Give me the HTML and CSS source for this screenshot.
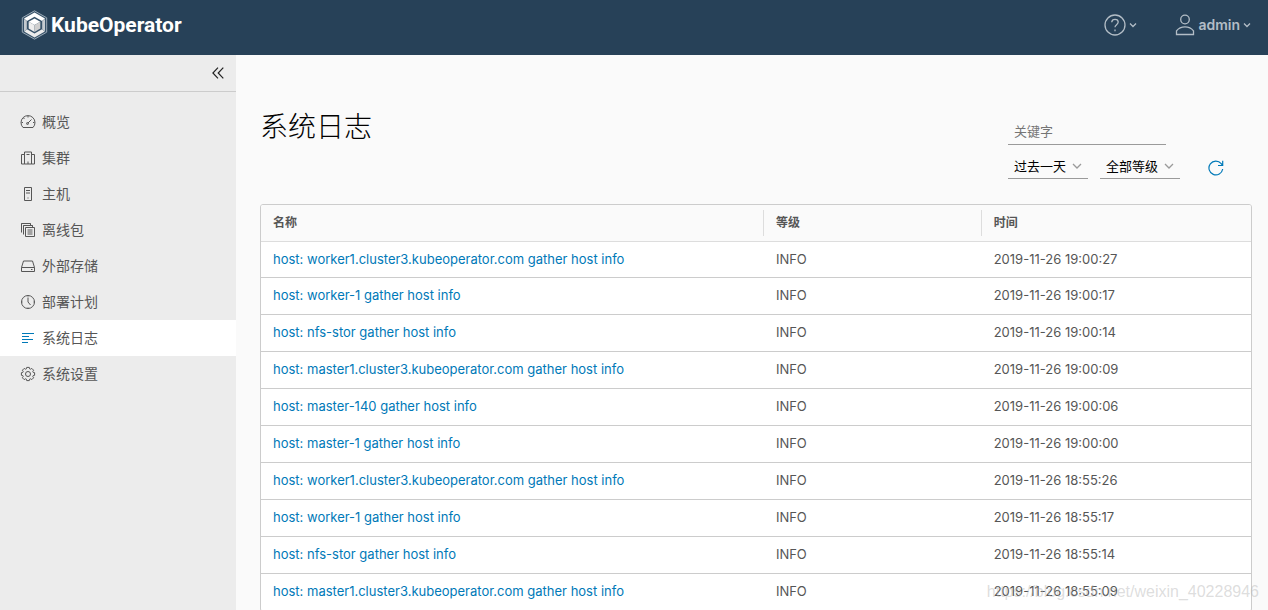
FILE: index.html
```html
<!DOCTYPE html>
<html lang="zh-CN">
<head>
<meta charset="utf-8">
<title>KubeOperator</title>
<link rel="stylesheet" href="styles.css">
</head>
<body>
<header class="header">
  <a class="brand" href="#">
    <svg class="brand-mark" viewBox="0 0 26 30" aria-hidden="true">
      <path d="M13 .8 25.2 7.8v14.4L13 29.2.8 22.2V7.8z" fill="#38536a" stroke="#9aa9b6" stroke-width="1"/>
      <path d="M13 2.500 23.500 8.500 20.500 11 13 6.800 5.500 11 2.500 8.500z" fill="#fff"/>
      <path d="M2.500 9 5.300 11v8.300l-2.800 2zM23.500 9 20.700 11v8.300l2.800 2z" fill="#c5cbd0"/>
      <path d="M2.700 21.500 5.500 19.300 13 23.600l7.500-4.300 2.800 2.200L13 27.500z" fill="#ececec"/>
      <path d="M13 8.600 18.800 11.800 13 15 7.200 11.800z" fill="#fff"/>
      <path d="M7.200 11.800 13 15v6.900l-5.800-3.400z" fill="#eee"/>
      <path d="M18.800 11.800 13 15v6.900l5.800-3.400z" fill="#cfcfcf"/>
    </svg>
    <span class="brand-name">KubeOperator</span>
  </a>
  <div class="header-actions">
    <button class="header-button" type="button" aria-label="帮助">
      <svg class="icon-help" viewBox="0 0 22 22" aria-hidden="true"><circle cx="11" cy="11" r="10"/><path d="M7.700 8.300c.2-1.900 1.500-2.900 3.300-2.900 1.900 0 3.200 1 3.200 2.700 0 2.600-3.200 2.500-3.200 5.200"/><path d="M11 15.500v1.700"/></svg>
      <svg class="icon-caret" viewBox="0 0 8 6" aria-hidden="true"><path d="M1 1.500 4 4.500 7 1.500"/></svg>
    </button>
    <button class="header-button" type="button">
      <svg class="icon-user" viewBox="0 0 20 22" aria-hidden="true"><circle cx="10" cy="5.500" r="4.300"/><path d="M1.500 20.500v-3.700c2-2.600 5-4 8.500-4s6.500 1.400 8.500 4v3.700z"/></svg>
      <span>admin</span>
      <svg class="icon-caret" viewBox="0 0 8 6" aria-hidden="true"><path d="M1 1.500 4 4.500 7 1.500"/></svg>
    </button>
  </div>
</header>
<div class="body">
  <nav class="sidebar">
    <div class="collapse-row">
      <button class="collapse" type="button" aria-label="收起"><svg viewBox="0 0 12 12" aria-hidden="true"><path d="M6 .7.9 6 6 11.300M11.300.7 6.200 6l5.100 5.300"/></svg></button>
    </div>
    <ul class="menu">
      <li><a class="menu-item" href="#"><svg viewBox="0 0 16 16" aria-hidden="true"><path d="M3 13.500a7 7 0 1 1 10 0z"/><path d="M8 2v1.500M1.500 8.500H3M13 8.500h1.500M3.500 4l1 1M7.500 9.500l4-4"/><circle cx="7.500" cy="9.500" r="1"/></svg>概览</a></li>
      <li><a class="menu-item" href="#"><svg viewBox="0 0 16 16" aria-hidden="true"><path d="M4.500 14V2h7v12zM4.500 4.500h-3V14h3M11.500 4.500h3V14h-3M6.500 4.500h3M8 11.500V14"/></svg>集群</a></li>
      <li><a class="menu-item" href="#"><svg viewBox="0 0 16 16" aria-hidden="true"><path d="M4.500 1.500h7v13h-7zM6 4.500h4M6 7h4M7.500 12h1"/></svg>主机</a></li>
      <li><a class="menu-item" href="#"><svg viewBox="0 0 16 16" aria-hidden="true"><path d="M5.500 5.500h9v9h-9zM3.500 12.500v-9h9M1.500 10.500v-9h9M3.500 3.500h9v2M1.500 1.500h9v2M7.500 8h5M7.500 10h5M7.500 12h5"/></svg>离线包</a></li>
      <li><a class="menu-item" href="#"><svg viewBox="0 0 16 16" aria-hidden="true"><path d="M1.500 9.500 3.500 3h9l2 6.500v4h-13zM1.500 9.500h13M11 11.500h1.500"/></svg>外部存储</a></li>
      <li><a class="menu-item" href="#"><svg viewBox="0 0 16 16" aria-hidden="true"><circle cx="8" cy="8" r="6.500"/><path d="M8 3.500V8l2.500 3M8 1.500v1M8 13.500v1M1.500 8h1M13.500 8h1"/></svg>部署计划</a></li>
      <li><a class="menu-item active" href="#" aria-current="page"><svg viewBox="0 0 16 16" aria-hidden="true"><path d="M2 3.500h12M2 6.500h7M2 9.500h11M2 12.500h6"/></svg>系统日志</a></li>
      <li><a class="menu-item" href="#"><svg viewBox="-8 -8 16 16" aria-hidden="true"><path stroke-linejoin="round" d="M6.600-1.300V1.300L5.200 1.600 4.800 2.600 5.600 3.800 3.800 5.600 2.600 4.800 1.600 5.200 1.300 6.600H-1.300L-1.600 5.200-2.600 4.800-3.800 5.600-5.600 3.800-4.800 2.600-5.200 1.600-6.600 1.300V-1.300L-5.200-1.600-4.800-2.600-5.600-3.800-3.800-5.600-2.600-4.800-1.600-5.200-1.300-6.600H1.300L1.600-5.200 2.600-4.800 3.800-5.600 5.600-3.800 4.800-2.600 5.200-1.600z"/><circle r="2.500"/></svg>系统设置</a></li>
    </ul>
  </nav>
  <main class="main">
    <div class="toolbar">
      <h1 class="title">系统日志</h1>
      <form class="filters">
        <input class="keyword" type="text" placeholder="关键字" aria-label="关键字">
        <div class="filter-row">
          <span class="select-box"><select class="select" aria-label="时间范围"><option>过去一天</option></select><svg class="select-caret" viewBox="0 0 10 6" aria-hidden="true"><path d="M1 1 5 5 9 1"/></svg></span>
          <span class="select-box"><select class="select" aria-label="日志等级"><option>全部等级</option></select><svg class="select-caret" viewBox="0 0 10 6" aria-hidden="true"><path d="M1 1 5 5 9 1"/></svg></span>
          <button class="refresh" type="button" aria-label="刷新"><svg viewBox="0 0 16 16" aria-hidden="true"><path d="M14.700 9A6.900 6.900 0 1 1 13.200 3.600L14.500 5.300M14.700.8v4.700H10"/></svg></button>
        </div>
      </form>
    </div>
    <div class="grid">
      <table class="table">
        <colgroup><col class="col-name"><col class="col-level"><col class="col-time"></colgroup>
        <thead><tr><th scope="col"><span>名称</span></th><th scope="col"><span>等级</span></th><th scope="col"><span>时间</span></th></tr></thead>
        <tbody>
          <tr><td><a href="#">host: worker1.cluster3.kubeoperator.com gather host info</a></td><td>INFO</td><td>2019-11-26 19:00:27</td></tr>
          <tr><td><a href="#">host: worker-1 gather host info</a></td><td>INFO</td><td>2019-11-26 19:00:17</td></tr>
          <tr><td><a href="#">host: nfs-stor gather host info</a></td><td>INFO</td><td>2019-11-26 19:00:14</td></tr>
          <tr><td><a href="#">host: master1.cluster3.kubeoperator.com gather host info</a></td><td>INFO</td><td>2019-11-26 19:00:09</td></tr>
          <tr><td><a href="#">host: master-140 gather host info</a></td><td>INFO</td><td>2019-11-26 19:00:06</td></tr>
          <tr><td><a href="#">host: master-1 gather host info</a></td><td>INFO</td><td>2019-11-26 19:00:00</td></tr>
          <tr><td><a href="#">host: worker1.cluster3.kubeoperator.com gather host info</a></td><td>INFO</td><td>2019-11-26 18:55:26</td></tr>
          <tr><td><a href="#">host: worker-1 gather host info</a></td><td>INFO</td><td>2019-11-26 18:55:17</td></tr>
          <tr><td><a href="#">host: nfs-stor gather host info</a></td><td>INFO</td><td>2019-11-26 18:55:14</td></tr>
          <tr><td><a href="#">host: master1.cluster3.kubeoperator.com gather host info</a></td><td>INFO</td><td>2019-11-26 18:55:09</td></tr>
        </tbody>
      </table>
    </div>
  </main>
</div>
<div class="watermark">https://blog.csdn.net/weixin_40228946</div>
</body>
</html>
```
FILE: styles.css
```css
* { box-sizing: border-box; }

body {
  margin: 0;
  height: 100vh;
  display: flex;
  flex-direction: column;
  overflow: hidden;
  position: relative;
  background: #fafafa;
  color: #565656;
  font: 13px/24px Inter, "Noto Sans CJK SC", sans-serif;
}

button, input, select { font: inherit; }

button {
  border: 0;
  padding: 0;
  background: none;
  cursor: pointer;
}

a { text-decoration: none; }

svg {
  fill: none;
  stroke: currentColor;
  flex: none;
}

.header {
  flex: none;
  height: 55px;
  display: flex;
  justify-content: space-between;
  padding: 0 17px 6px 21px;
  background: #274158;
}

.brand {
  display: flex;
  align-items: center;
  gap: 3px;
  color: #fff;
}

.brand-mark {
  width: 27px;
  height: 30px;
  stroke: none;
}

.brand-name {
  font: bold 21px/30px Roboto, sans-serif;
}

.header-actions {
  display: flex;
  gap: 38px;
}

.header-button {
  display: flex;
  align-items: center;
  gap: 3px;
  color: #b3bdc6;
  font-size: 14px;
  font-weight: 600;
}

.icon-help {
  width: 22px;
  height: 22px;
  stroke-width: 1.3;
}

.icon-user {
  width: 20px;
  height: 22px;
  stroke-width: 1.3;
}

.icon-caret {
  width: 8px;
  height: 6px;
  stroke-width: 1.3;
}

.body {
  flex: 1;
  min-height: 0;
  display: flex;
}

.sidebar {
  flex: none;
  width: 236px;
  background: #ececec;
}

.collapse-row {
  height: 37px;
  display: flex;
  align-items: center;
  justify-content: flex-end;
  padding-right: 12px;
  border-bottom: 1px solid #ccc;
}

.collapse {
  display: flex;
  color: #222;
}

.collapse svg {
  width: 12px;
  height: 12px;
  stroke-width: 1.2;
}

.menu {
  list-style: none;
  margin: 0;
  padding: 12px 0;
}

.menu-item {
  height: 36px;
  display: flex;
  align-items: center;
  gap: 6px;
  padding-left: 20px;
  color: #565656;
  font-size: 14px;
}

.menu-item svg {
  width: 16px;
  height: 16px;
}

.menu-item.active { background: #fff; }

.menu-item.active svg { color: #0079b8; }

.main {
  flex: 1;
  min-width: 0;
  overflow: hidden;
  padding: 46px 16px 0 24px;
}

.toolbar {
  display: flex;
  justify-content: space-between;
  padding-right: 28px;
  margin-bottom: 25px;
}

.title {
  margin: 0;
  color: #000;
  font: 200 28px/48px "Noto Sans CJK SC", sans-serif;
}

.filters {
  display: flex;
  flex-direction: column;
  gap: 9px;
  padding-top: 19px;
}

.keyword {
  width: 158px;
  height: 25px;
  padding: 0 6px 2px;
  border: 0;
  border-bottom: 1px solid #9a9a9a;
  background: none;
}

.keyword::placeholder {
  color: #757575;
  opacity: 1;
}

.filter-row {
  display: flex;
  gap: 12px;
}

.select-box {
  position: relative;
  width: 80px;
}

.select {
  appearance: none;
  display: block;
  width: 100%;
  height: 25px;
  padding: 0 20px 2px 6px;
  border: 0;
  border-bottom: 1px solid #9a9a9a;
  border-radius: 0;
  background: none;
  color: #000;
}

.select-caret {
  position: absolute;
  top: 9px;
  right: 6px;
  width: 10px;
  height: 6px;
  color: #9a9a9a;
  stroke-width: 1.3;
  pointer-events: none;
}

.refresh {
  display: flex;
  align-items: center;
  margin-left: 16px;
  padding-top: 2px;
  color: #0079b8;
}

.refresh svg {
  width: 16px;
  height: 16px;
  stroke-width: 1.2;
}

.grid {
  border: 1px solid #ccc;
  border-radius: 3px;
  background: #fff;
  overflow: hidden;
}

.table {
  width: 100%;
  table-layout: fixed;
  border-collapse: separate;
  border-spacing: 0;
}

.col-name { width: 51%; }
.col-level { width: 22%; }
.col-time { width: 27%; }

.table th {
  height: 37px;
  padding: 0;
  border-bottom: 1px solid #ddd;
  background: #fafafa;
  text-align: left;
  font-size: 12px;
}

.table th span {
  display: block;
  padding-left: 12px;
  line-height: 26px;
}

.table th + th span {
  margin-left: -3px;
  border-left: 1px solid #ddd;
}

.table td {
  height: 37px;
  padding: 0 12px 2px;
  border-bottom: 1px solid #ccc;
  white-space: nowrap;
}

.table td + td { padding-left: 10px; }

.table tbody tr:first-child td { height: 36px; }

.table a { color: #0079b8; }

.watermark {
  position: absolute;
  right: 9px;
  bottom: 6px;
  color: rgba(180, 180, 180, 0.45);
  font: 16px/24px "Liberation Sans", sans-serif;
  pointer-events: none;
}
```
